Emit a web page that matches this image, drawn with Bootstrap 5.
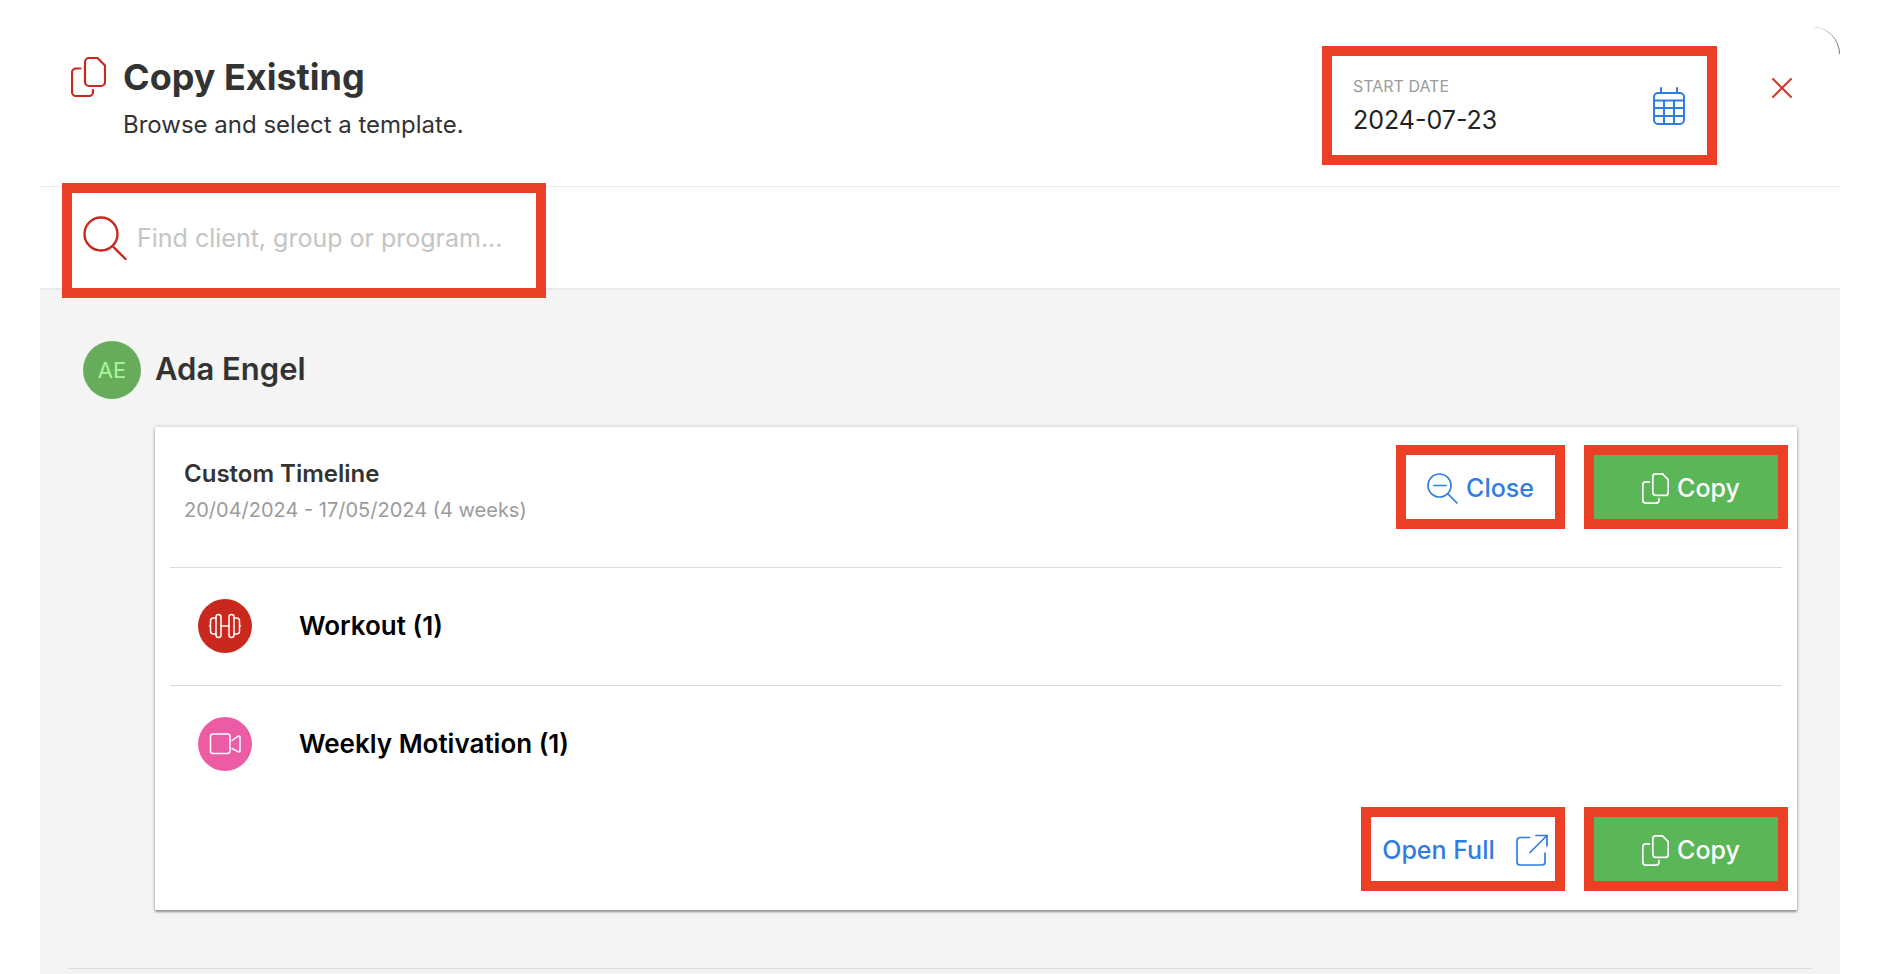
<!DOCTYPE html>
<html lang="en">
<head>
<meta charset="utf-8">
<meta name="viewport" content="width=device-width, initial-scale=1">
<title>Copy Existing</title>
<link href="https://cdn.jsdelivr.net/npm/bootstrap@5.3.0/dist/css/bootstrap.min.css" rel="stylesheet">
<style>
  :root { --callout: #ec4026; --brand-red: #c9291c; --brand-blue: #2f7de1; --ink: #333; --muted: #9b9b9b; }
  body { font-family: Inter, "Liberation Sans", sans-serif; font-size: 24px; line-height: 32px; color: var(--ink); background: #fff; }
  svg { display: block; flex: none; fill: none; stroke: currentColor; stroke-linecap: round; stroke-linejoin: round; }
  .sheet { margin: 27px 54px 0 40px; min-height: calc(100vh - 27px); }
  .sheet::after { content: ""; position: absolute; top: 0; right: 0; width: 27px; height: 27px; border-right: 1px solid #777; border-top-right-radius: 27px; }
  .sheet-head { padding: 19px 38px 21px 31px; border-bottom: 1px solid #e9e9e9; gap: 17px; }
  .head-icon { margin-top: 11px; color: var(--brand-red); }
  .sheet-title { font-size: 36px; line-height: 46px; font-weight: 700; margin-bottom: 9px; }
  .callout-box { border: 10px solid var(--callout); border-radius: 0; }
  .date-field { width: 395px; height: 119px; padding: 0 22px 0 21px; background: #fff; color: var(--brand-blue); }
  .date-field label { font-size: 16px; line-height: 20px; color: var(--muted); }
  .plain-input { border: 0; padding: 0; background: transparent; outline: 0; min-width: 0; width: 100%; height: 32px; font-size: 25px; line-height: 32px; }
  .date-field .plain-input { color: #222; }
  .close-x { width: 40px; height: 40px; margin: 22px 0 0 28px; color: #d3372c; }
  .search-row { padding: 6px 32px 0; border-bottom: 2px solid #e9e9e9; }
  .search-box { width: 464px; height: 95px; padding: 0 11px 5px; gap: 10px; outline: 10px solid var(--callout); background: #fff; color: var(--brand-red); }
  .search-box .plain-input::placeholder { color: #c4c4c4; opacity: 1; }
  .results { background: #f4f4f4; padding-top: 51px; }
  .client { padding-left: 43px; gap: 14px; }
  .avatar { width: 58px; height: 58px; background: #67ac5b; color: #a6f79b; font-size: 22px; }
  .client-name { font-size: 31px; line-height: 40px; font-weight: 600; padding-bottom: 3px; }
  .plan { margin: 28px 43px 0 115px; background: #fff; box-shadow: 0 2px 2px rgba(0,0,0,.34), 0 0 4px rgba(0,0,0,.22); }
  .plan-head { padding: 18px 9px 38px 29px; }
  .plan-text { padding-top: 15px; }
  .plan-title { font-size: 24px; line-height: 28px; font-weight: 600; margin-bottom: 10px; }
  .plan-dates { font-size: 20px; line-height: 24px; color: var(--muted); }
  .plan-row { margin: 0 15px; padding: 31px 28px 32px; gap: 47px; border-top: 1px solid #dadada; color: #000; font-size: 26px; font-weight: 600; }
  .plan-foot { padding: 4px 9px 19px; }
  .disc { width: 54px; height: 54px; color: #fff; }
  .disc-red { background: #c8281d; }
  .disc-pink { background: #ec5ca5; }
  .action { height: 84px; padding: 2px 0 0; gap: 8px; font-size: 25px; line-height: 32px; font-weight: 500; }
  .action-link { color: var(--brand-blue); width: 169px; }
  .action-wide { width: 204px; gap: 21px; padding-left: 4px; }
  .action-copy { width: 204px; padding-left: 10px; color: #fff; background: #5ab656; }
  .action-link:hover { color: var(--brand-blue); background: #fff; border-color: var(--callout); }
  .action-copy:hover { color: #fff; background: #50a84c; border-color: var(--callout); }
  .actions { gap: 19px; }
  .end-rule { margin: 58px 29px 4px; border-top: 1px solid #dadada; }
</style>
</head>
<body>
<svg width="0" height="0" class="position-absolute" aria-hidden="true">
  <symbol id="copy" viewBox="0 0 35 40">
    <path d="M18 1h8.5L34 8.5V25a4 4 0 0 1-4 4H18a4 4 0 0 1-4-4V5a4 4 0 0 1 4-4z"/>
    <path d="M9.500 11.500H5a4 4 0 0 0-4 4V35a4 4 0 0 0 4 4h13a4 4 0 0 0 4-4v-2"/>
  </symbol>
</svg>

<main class="sheet position-relative d-flex flex-column">
  <header class="sheet-head d-flex align-items-start">
    <svg class="head-icon" width="35" height="40" stroke-width="2.200"><use href="#copy"/></svg>
    <div class="pt-2 flex-grow-1">
      <h1 class="sheet-title mt-0">Copy Existing</h1>
      <p class="m-0">Browse and select a template.</p>
    </div>
    <div class="date-field callout-box d-flex align-items-center justify-content-between">
      <div class="d-flex flex-column flex-grow-1">
        <label for="start-date">START DATE</label>
        <input id="start-date" class="plain-input mt-2" type="text" value="2024-07-23">
      </div>
      <svg width="32" height="38" viewBox="0 0 32 38" stroke-width="2">
        <rect x="1" y="6" width="30" height="31" rx="4"/>
        <path d="M8 1v5M24 1v5M1 13.500h30M1 21h30M1 29h30M11 13.500V37M21 13.500V37"/>
      </svg>
    </div>
    <button class="close-x btn p-0 border-0 d-flex align-items-center justify-content-center" type="button" aria-label="Close dialog">
      <svg width="20" height="20" viewBox="0 0 20 20" stroke-width="2"><path d="M1 1l18 18M19 1L1 19"/></svg>
    </button>
  </header>

  <div class="search-row">
    <div class="search-box position-relative d-flex align-items-center">
      <svg width="44" height="44" viewBox="0 0 44 44" stroke-width="2.400"><circle cx="18" cy="18" r="16.500"/><path d="M30 30.500L42.500 43"/></svg>
      <input class="plain-input flex-grow-1" type="text" placeholder="Find client, group or program..." aria-label="Find client, group or program">
    </div>
  </div>

  <section class="results flex-grow-1">
    <div class="client d-flex align-items-center">
      <span class="avatar rounded-circle d-flex align-items-center justify-content-center">AE</span>
      <h2 class="client-name m-0">Ada Engel</h2>
    </div>

    <article class="plan">
      <div class="plan-head d-flex justify-content-between">
        <div class="plan-text">
          <h3 class="plan-title mt-0">Custom Timeline</h3>
          <p class="plan-dates m-0">20/04/2024 - 17/05/2024 (4 weeks)</p>
        </div>
        <div class="actions d-flex">
          <button class="btn action action-link callout-box d-flex align-items-center justify-content-center" type="button">
            <svg width="31" height="31" viewBox="0 0 31 31" stroke-width="1.700"><circle cx="12.500" cy="12.500" r="11.500"/><path d="M7 12.500h12M21 21l9 9"/></svg>
            Close
          </button>
          <button class="btn action action-copy callout-box d-flex align-items-center justify-content-center" type="button">
            <svg width="27" height="31" stroke-width="2.200"><use href="#copy"/></svg>
            Copy
          </button>
        </div>
      </div>

      <div class="plan-row d-flex align-items-center">
        <span class="disc disc-red rounded-circle d-flex align-items-center justify-content-center">
          <svg width="34" height="26" viewBox="0 0 34 26" stroke-width="1.500">
            <rect x="8" y="1.500" width="5" height="23" rx="2.500"/><rect x="21" y="1.500" width="5" height="23" rx="2.500"/>
            <path d="M8 5H5.500a3 3 0 0 0-3 3v10a3 3 0 0 0 3 3H8M26 5h2.500a3 3 0 0 1 3 3v10a3 3 0 0 1-3 3H26M13 13h8M1.500 13h1M31.500 13h1"/>
          </svg>
        </span>
        <span>Workout (1)</span>
      </div>
      <div class="plan-row d-flex align-items-center">
        <span class="disc disc-pink rounded-circle d-flex align-items-center justify-content-center">
          <svg width="32" height="22" viewBox="0 0 32 22" stroke-width="1.500">
            <rect x="1.500" y="1" width="19.500" height="19.500" rx="2.500"/>
            <path d="M23 7.500l6-4.200q2-1 2 1v13.400q0 2-2 1l-6-3.200"/>
          </svg>
        </span>
        <span>Weekly Motivation (1)</span>
      </div>

      <div class="plan-foot actions d-flex justify-content-end">
        <button class="btn action action-link action-wide callout-box d-flex align-items-center justify-content-center" type="button">
          Open Full
          <svg width="32" height="32" viewBox="0 0 32 32" stroke-width="1.700"><path d="M13.500 3.500H4a3 3 0 0 0-3 3V28a3 3 0 0 0 3 3h22a3 3 0 0 0 3-3v-9M20 1.500h11V12M31 1.500L14 18.500"/></svg>
        </button>
        <button class="btn action action-copy callout-box d-flex align-items-center justify-content-center" type="button">
          <svg width="27" height="31" stroke-width="2.200"><use href="#copy"/></svg>
          Copy
        </button>
      </div>
    </article>
    <div class="end-rule"></div>
  </section>
</main>
<script src="https://cdn.jsdelivr.net/npm/bootstrap@5.3.0/dist/js/bootstrap.bundle.min.js"></script>
</body>
</html>
